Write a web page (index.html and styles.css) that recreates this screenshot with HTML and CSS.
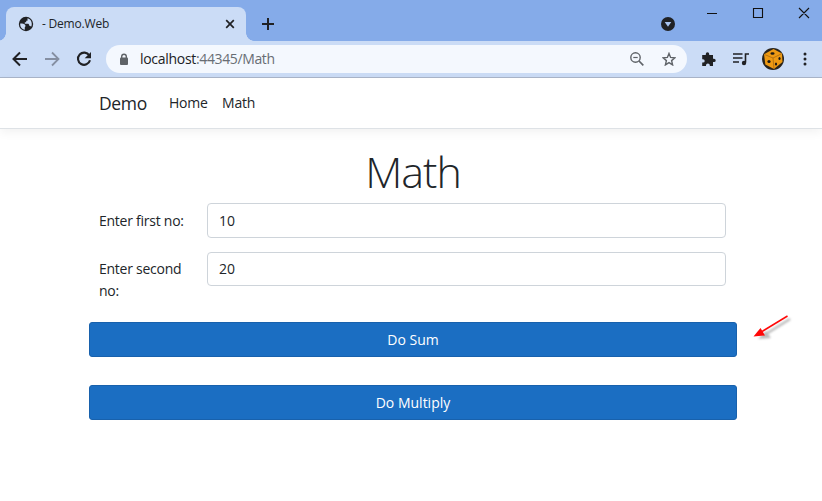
FILE: index.html
```html
<!DOCTYPE html>
<html lang="en">
<head>
<meta charset="utf-8">
<title>- Demo.Web</title>
<link rel="stylesheet" href="styles.css">
</head>
<body>
<div class="browser">
  <div class="tabstrip">
    <div class="tab">
      <svg class="globe" width="16" height="16" viewBox="0 0 16 16"><circle cx="8" cy="8" r="7.2" fill="#202124"/><path d="M2.200 7.500c2.400 0 4.300.3 5 1.500.6 1.200.2 1.700-.4 2.300v2.400C4 13.300 2 11 2.200 7.500z" fill="#cbdcf6"/><path d="M9.500 2.300c2.700.7 4.300 3 4.300 5.700 0 1-.3 2-.7 2.800-.5-.7-1-1-1.800-1-.2-1.500-.6-2-1.800-2H6.800V6.300h1.400V4.800h1.300z" fill="#cbdcf6"/></svg>
      <span class="tab-title">- Demo.Web</span>
      <svg class="tab-close" width="10" height="10" viewBox="0 0 10 10"><path d="m1.2 1.2 7.6 7.6m0-7.6L1.2 8.8" stroke="#202124" stroke-width="1.7"/></svg>
    </div>
    <svg class="plus" width="12" height="12" viewBox="0 0 12 12"><path d="M6 0v12M0 6h12" stroke="#202124" stroke-width="2"/></svg>
    <svg class="search-tabs" width="14" height="14" viewBox="0 0 14 14"><circle cx="7" cy="7" r="7" fill="#202124"/><path d="M3.7 5h6.6L7 9.8z" fill="#a9c4f0"/></svg>
    <svg class="window-controls" width="104" height="12" viewBox="0 0 104 12"><path d="M1 6.5h10M47.500 1.500h9v9h-9zM93 1l10 10M103 1 93 11" fill="none" stroke="#111" stroke-width="1.1"/></svg>
  </div>
  <div class="toolbar">
    <svg class="back" width="16" height="16" viewBox="0 0 16 16"><path d="M15 8H2.500M8 1.500 1.500 8 8 14.500" fill="none" stroke="#202124" stroke-width="2"/></svg>
    <svg class="forward" width="16" height="16" viewBox="0 0 16 16"><path d="M1 8h12.500M8 1.500 14.500 8 8 14.500" fill="none" stroke="#858fa2" stroke-width="1.800"/></svg>
    <svg class="reload" width="16" height="16" viewBox="0 0 16 16"><path d="M13.300 4.500A6.100 6.100 0 1 0 14 9.300" fill="none" stroke="#202124" stroke-width="2.100"/><path d="M15 .9v6.300H8.700z" fill="#202124"/></svg>
    <div class="address">
      <svg class="lock" width="10" height="13" viewBox="0 0 10 13"><rect x="1" y="4.500" width="8" height="7.500" rx="1" fill="#5f6368"/><path d="M2.700 5V3.500a2.300 2.300 0 0 1 4.600 0V5" fill="none" stroke="#5f6368" stroke-width="1.400"/></svg>
      <span class="url"><span class="host">localhost</span>:44345/Math</span>
      <svg class="zoom-out" width="14" height="14" viewBox="0 0 14 14"><circle cx="5.500" cy="5.500" r="4.700" fill="none" stroke="#5f6368" stroke-width="1.400"/><path d="M3.300 5.500h4.400" stroke="#5f6368" stroke-width="1.200"/><path d="m9 9 4.300 4.300" stroke="#5f6368" stroke-width="1.700"/></svg>
      <svg class="star" width="14" height="14" viewBox="0 0 14 14"><path d="m7 1.400 1.600 4 4.300.4-3.300 2.800 1 4.300L7 10.600l-3.600 2.300 1-4.300-3.300-2.800 4.300-.4z" fill="none" stroke="#5f6368" stroke-width="1.400"/></svg>
    </div>
    <svg class="extensions" width="15" height="15" viewBox="0 0 15 15"><path d="M1.200 3h3.600V2a1.700 1.700 0 0 1 3.400 0v1H12v3.700h1a1.700 1.700 0 0 1 0 3.400h-1v4H8.800v-.8a1.900 1.900 0 0 0-3.800 0v.8H1.200v-3.500H2a1.700 1.700 0 0 0 0-3.400h-.8z" fill="#202124"/></svg>
    <svg class="media" width="16" height="14" viewBox="0 0 16 14"><path d="M0 2h9.500M0 6h9.500M0 10h6M12.500 10.500V2H16" fill="none" stroke="#202124" stroke-width="1.600"/><circle cx="11" cy="11" r="2.200" fill="#202124"/></svg>
    <svg class="avatar" width="22" height="22" viewBox="0 0 22 22"><circle cx="11" cy="11" r="11" fill="#29241d"/><path d="M2 6.300 11.500 1 20 5.500 20.500 14 12 21 3.300 16.500z" fill="#ee9a13"/><path d="m2.500 6.500 8.500 3.500 9-4.500M11 10l1 11" fill="none" stroke="#a9690f" stroke-width=".8"/><g fill="#1b1916"><ellipse cx="10.500" cy="5.500" rx="2.100" ry="1.300"/><ellipse cx="7" cy="13.500" rx="1.600" ry="1.500"/><ellipse cx="14" cy="16" rx="1.100" ry="1.600"/><ellipse cx="17.500" cy="10.500" rx="1.100" ry="1.600"/></g></svg>
    <svg class="more" width="4" height="14" viewBox="0 0 4 14"><g fill="#202124"><circle cx="2" cy="2" r="1.500"/><circle cx="2" cy="7" r="1.500"/><circle cx="2" cy="12" r="1.500"/></g></svg>
  </div>
</div>
<nav class="navbar">
  <span class="brand">Demo</span>
  <span class="nav-link home">Home</span>
  <span class="nav-link math">Math</span>
</nav>
<main class="content">
  <h1>Math</h1>
  <div class="field first">
    <label for="a">Enter first no:</label>
    <input id="a" type="text" value="10">
  </div>
  <div class="field second">
    <label for="b">Enter second no:</label>
    <input id="b" type="text" value="20">
  </div>
  <button type="button">Do Sum</button>
  <button type="button">Do Multiply</button>
</main>
<svg class="arrow" width="44" height="32" viewBox="0 0 44 32"><g class="arrow-shadow"><path d="M38 6 14 21" stroke="#bbb" stroke-width="2.500"/><path d="m6 26 8-8 5 7z" fill="#bbb"/></g><path d="M35.500 3 10 18.500" stroke="#ff0808" stroke-width="1.500"/><path d="m1.500 23.500 7-8.500 4.500 7.500z" fill="#ff0808"/></svg>
</body>
</html>
```

FILE: styles.css
```css
* { box-sizing: border-box; }
body {
  margin: 0;
  height: 501px;
  overflow: hidden;
  background: #fff;
  color: #212529;
  font: 14px/22px "Open Sans", "Noto Sans", sans-serif;
}
svg { display: block; flex: none; }
.tabstrip { height: 41px; display: flex; background: #85abe9; padding-left: 6px; }
.tab {
  position: relative;
  width: 240px;
  height: 34px;
  margin-top: 7px;
  padding: 0 11px 0 12px;
  display: flex;
  align-items: center;
  background: #cbdcf6;
  border-radius: 8px 8px 0 0;
}
.tab::before, .tab::after {
  content: "";
  position: absolute;
  bottom: 0;
  width: 8px;
  height: 8px;
}
.tab::before { left: -8px; background: radial-gradient(circle at 0 0, transparent 7.5px, #cbdcf6 8px); }
.tab::after { right: -8px; background: radial-gradient(circle at 100% 0, transparent 7.5px, #cbdcf6 8px); }
.tab-title { margin-left: 8px; font-size: 12px; letter-spacing: -.2px; white-space: nowrap; }
.tab-close { margin-left: auto; }
.plus { margin: 18px 0 0 16px; }
.search-tabs { margin: 17px 0 0 387px; }
.window-controls { margin: 7px 0 0 31px; }
.toolbar {
  height: 37px;
  display: flex;
  align-items: center;
  padding-left: 12px;
  background: #cbdcf6;
  border-bottom: 1px solid #aab6ca;
}
.forward { margin-left: 16px; }
.reload { margin-left: 16px; }
.address {
  width: 581px;
  height: 28px;
  margin-left: 14px;
  padding: 0 11px 0 13px;
  display: flex;
  align-items: center;
  border-radius: 14px;
  background: #f4f8fe;
}
.url { margin-left: 11px; color: #686d74; letter-spacing: -.37px; white-space: nowrap; }
.host { color: #202124; letter-spacing: -.3px; }
.zoom-out { margin-left: auto; }
.star { margin-left: 18px; }
.extensions { margin-left: 14px; }
.media { margin-left: 17px; }
.avatar { margin-left: 13px; }
.more { margin-left: 19px; }
.navbar {
  height: 51px;
  display: flex;
  align-items: center;
  padding-left: 99px;
  border-bottom: 1px solid #dee2e6;
  box-shadow: 0 3px 10px rgba(0, 0, 0, .06);
}
.brand { width: 48px; font-size: 17.500px; letter-spacing: -.35px; }
.nav-link { font-size: 14px; letter-spacing: -.2px; }
.home { width: 39px; margin-left: 22px; }
.math { margin-left: 14px; }
.content { width: 648px; margin-left: 89px; }
h1 { height: 74px; margin: 0; padding-top: 17px; font-size: 43px; letter-spacing: -1px; line-height: 52px; font-weight: 300; text-align: center; }
.field { display: flex; padding: 0 11px 0 10px; }
.field label { width: 108px; padding: 7px 16px 0 0; letter-spacing: -.25px; }
.first { height: 49px; }
.second { height: 70px; }
.second label { padding-top: 6px; }
input {
  width: 519px;
  height: 35px;
  padding: 0 11px 1px;
  border: 1px solid #ced4da;
  border-radius: 4px;
  color: #212529;
  font: inherit;
}
.second input { height: 34px; }
button {
  display: block;
  width: 100%;
  height: 35px;
  margin: 0 0 28px;
  padding: 0;
  border: 1px solid #1861ac;
  border-radius: 3px;
  background: #1b6ec2;
  color: #fff;
  font: inherit;
}
.arrow { position: absolute; left: 752px; top: 313px; }
.arrow-shadow { filter: blur(1px); }
```
